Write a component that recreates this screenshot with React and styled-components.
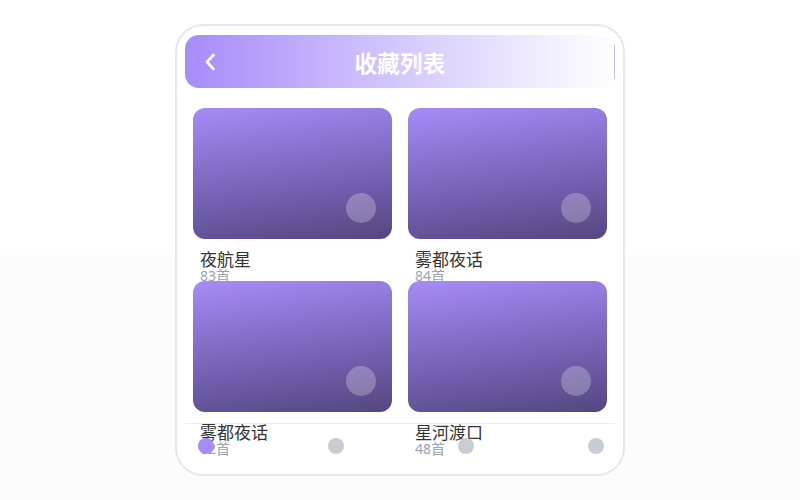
import React from "react";
import styled, { createGlobalStyle } from "styled-components";

const GlobalStyle = createGlobalStyle`
  html, body { margin: 0; padding: 0; }
  html {
    background: linear-gradient(to bottom, #ffffff 0, #ffffff 255px, #fcfcfc 255px, #fcfcfc 100%);
    min-height: 100%;
  }
  body {
    font-family: "Noto Sans", "Noto Sans CJK SC", sans-serif;
    background: transparent;
  }
`;

const Page = styled.div`
  height: 500px;
  display: flex;
  align-items: center;
  justify-content: center;
`;

const Phone = styled.div`
  position: relative;
  box-sizing: border-box;
  width: 450px;
  height: 452px;
  border: 2px solid #e6e6ec;
  border-radius: 28px;
  background: #ffffff;
  overflow: hidden;
  padding: 9px 8px 0 8px;
`;

const Header = styled.header`
  height: 53px;
  border-radius: 14px;
  background: linear-gradient(to right, #a78bfa 0%, #d4c8fc 50%, #ffffff 100%);
  display: grid;
  grid-template-columns: 1fr auto 1fr;
  align-items: center;
`;

const BackButton = styled.button`
  justify-self: start;
  margin-left: 18px;
  width: 14px;
  height: 20px;
  padding: 0;
  border: 0;
  background: none;
  display: flex;
  align-items: center;
  justify-content: center;
  cursor: pointer;
`;

const Title = styled.h1`
  margin: 0;
  color: #ffffff;
  font-size: 22.5px;
  font-weight: 700;
  letter-spacing: 0.3px;
  font-family: "Noto Sans CJK SC", sans-serif;
`;

const EdgeMark = styled.span`
  justify-self: end;
  width: 1px;
  height: 33px;
  background: #c9bcf6;
`;

const Grid = styled.div`
  display: grid;
  grid-template-columns: 1fr 1fr;
  grid-auto-rows: 157px;
  column-gap: 16px;
  row-gap: 16px;
  padding: 20px 8px 0 8px;
`;

const Item = styled.div`
  display: flex;
  flex-direction: column;
  min-width: 0;
`;

const Cover = styled.div`
  position: relative;
  height: 131px;
  flex: none;
  border-radius: 12px;
  background: linear-gradient(172deg, #a68bf7 0%, #7d67bf 50%, #554680 100%);
`;

const PlayDot = styled.span`
  position: absolute;
  right: 16px;
  bottom: 16px;
  width: 30px;
  height: 30px;
  border-radius: 50%;
  background: rgba(255, 255, 255, 0.25);
`;

const Name = styled.div`
  margin: 10px 0 0 7px;
  font-size: 17px;
  line-height: 20px;
  color: #333333;
  font-family: "Noto Sans CJK SC", sans-serif;
`;

const Count = styled.div`
  margin-left: 7px;
  font-size: 14px;
  line-height: 14px;
  color: #9ca3af;
  font-family: "Noto Sans", "Noto Sans CJK SC", sans-serif;
`;

const TabBar = styled.nav`
  position: absolute;
  left: 8px;
  right: 8px;
  bottom: 0;
  height: 51px;
  border-top: 1px solid #ededf0;
  display: flex;
  justify-content: space-between;
  align-items: flex-start;
  padding: 14px 11px 0 13px;
  box-sizing: border-box;
`;

const Tab = styled.span`
  width: 16px;
  height: 16px;
  border-radius: 50%;
  background: ${(p) => (p.$active ? "#a78bfa" : "#c8ccd3")};
`;

const items = [
  { name: "夜航星", count: 83 },
  { name: "雾都夜话", count: 84 },
  { name: "雾都夜话", count: 62 },
  { name: "星河渡口", count: 48 },
];

export default function App() {
  return (
    <>
      <GlobalStyle />
      <Page>
        <Phone>
          <Header>
            <BackButton aria-label="返回">
              <svg width="12" height="18" viewBox="0 0 12 18" fill="none">
                <polyline
                  points="9.5,2 3,9 9.5,16"
                  stroke="#ffffff"
                  strokeWidth="2.6"
                  strokeLinecap="round"
                  strokeLinejoin="round"
                />
              </svg>
            </BackButton>
            <Title>收藏列表</Title>
            <EdgeMark />
          </Header>
          <Grid>
            {items.map((it, i) => (
              <Item key={i}>
                <Cover>
                  <PlayDot />
                </Cover>
                <Name>{it.name}</Name>
                <Count>{it.count}首</Count>
              </Item>
            ))}
          </Grid>
          <TabBar>
            <Tab $active />
            <Tab />
            <Tab />
            <Tab />
          </TabBar>
        </Phone>
      </Page>
    </>
  );
}
